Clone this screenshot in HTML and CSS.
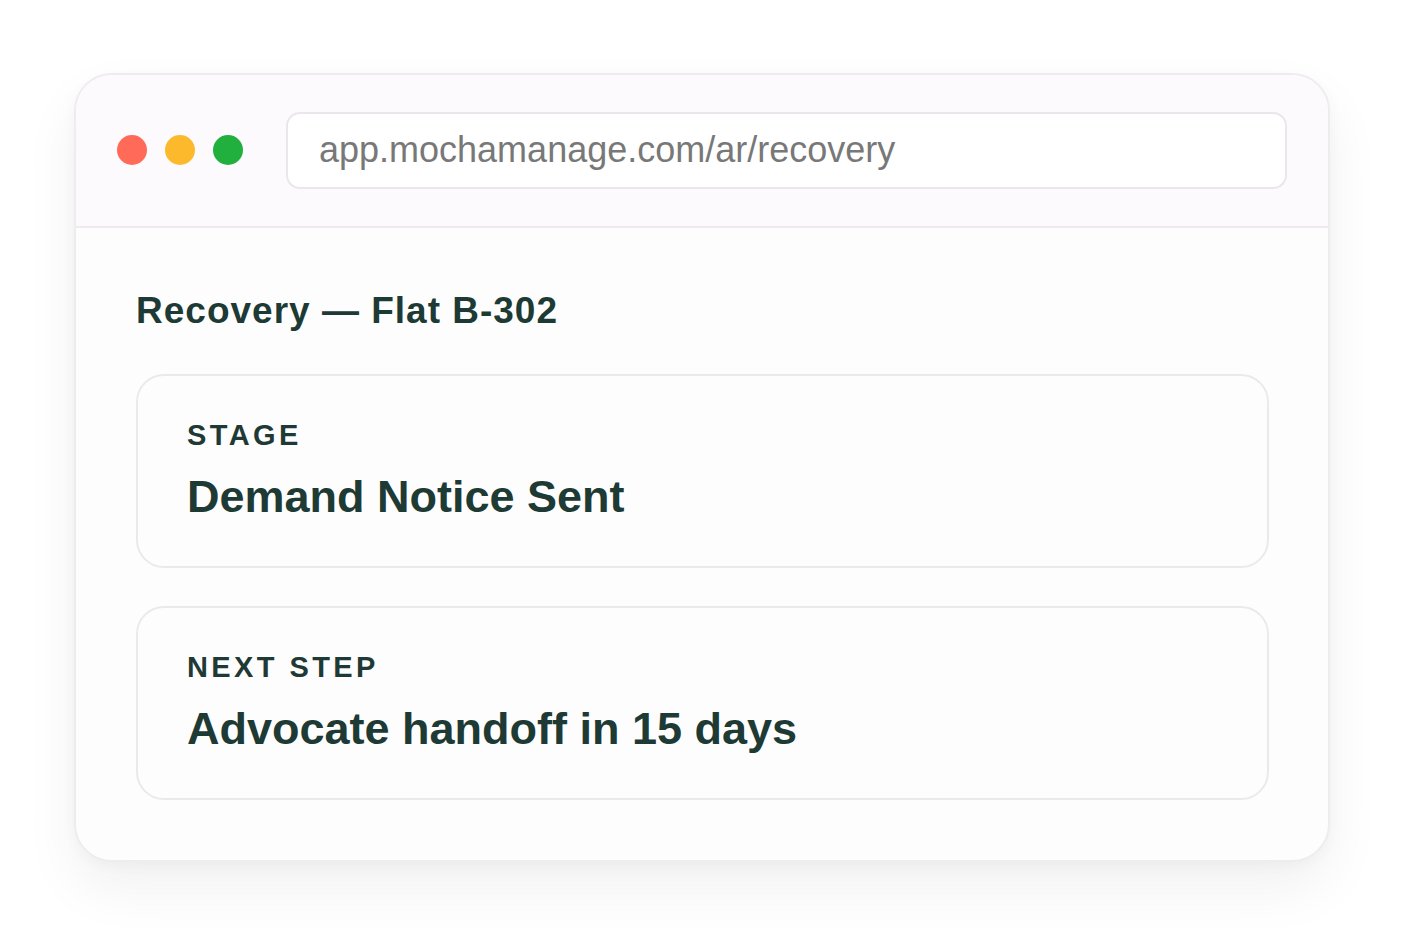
FILE: index.html
```html
<!DOCTYPE html>
<html>
<head>
<meta charset="utf-8">
<link rel="stylesheet" href="styles.css">
</head>
<body>
<div class="stage">
  <div class="window">
    <div class="titlebar">
      <div class="dots">
        <span class="dot red"></span>
        <span class="dot yellow"></span>
        <span class="dot green"></span>
      </div>
      <div class="url">app.mochamanage.com/ar/recovery</div>
    </div>
    <div class="content">
      <h1 class="heading">Recovery — Flat B-302</h1>
      <div class="card">
        <div class="label">STAGE</div>
        <div class="value">Demand Notice Sent</div>
      </div>
      <div class="card">
        <div class="label">NEXT STEP</div>
        <div class="value">Advocate handoff in 15 days</div>
      </div>
    </div>
  </div>
</div>
</body>
</html>
```
FILE: styles.css
```css
html, body {
  margin: 0;
  padding: 0;
  background: #ffffff;
  font-family: "Liberation Sans", Arial, sans-serif;
}
.stage {
  width: 1404px;
  height: 936px;
  padding: 73px 0 0 74px;
  box-sizing: border-box;
}
.window {
  width: 1256px;
  height: 789px;
  box-sizing: border-box;
  border: 2px solid #efecef;
  border-radius: 38px;
  background: #fefdfe;
  overflow: hidden;
  box-shadow: 0 26px 56px rgba(0, 0, 0, 0.06), 0 4px 14px rgba(0, 0, 0, 0.03);
  display: flex;
  flex-direction: column;
}
.titlebar {
  height: 153px;
  box-sizing: border-box;
  background: #fcfafc;
  border-bottom: 2px solid #eeeaee;
  display: flex;
  align-items: center;
  padding: 0 41px 1px 41px;
  gap: 43px;
}
.dots {
  display: flex;
  gap: 18px;
}
.dot {
  width: 30px;
  height: 30px;
  border-radius: 50%;
  display: block;
}
.red { background: #ff6a59; }
.yellow { background: #fdb92c; }
.green { background: #21af3e; }
.url {
  flex: 1;
  height: 77px;
  box-sizing: border-box;
  border: 2px solid #ebe6eb;
  border-radius: 14px;
  background: #ffffff;
  display: flex;
  align-items: center;
  padding-left: 31px;
  font-size: 36px;
  color: #787878;
}
.content {
  padding: 61px 59px 0 60px;
  display: flex;
  flex-direction: column;
  gap: 38px;
}
.heading {
  margin: 0 0 4px 0;
  font-size: 37px;
  line-height: 43px;
  font-weight: 700;
  letter-spacing: 1px;
  color: #1e3a34;
}
.card {
  height: 194px;
  box-sizing: border-box;
  border: 2px solid #ece9ec;
  border-radius: 28px;
  background: #fefdfe;
  padding: 42px 49px 0 49px;
  display: flex;
  flex-direction: column;
  gap: 18px;
}
.label {
  font-size: 29px;
  line-height: 34px;
  font-weight: 700;
  letter-spacing: 3.4px;
  color: #1f3a35;
}
.value {
  font-size: 45px;
  line-height: 53px;
  font-weight: 700;
  color: #1e3a34;
}
```
